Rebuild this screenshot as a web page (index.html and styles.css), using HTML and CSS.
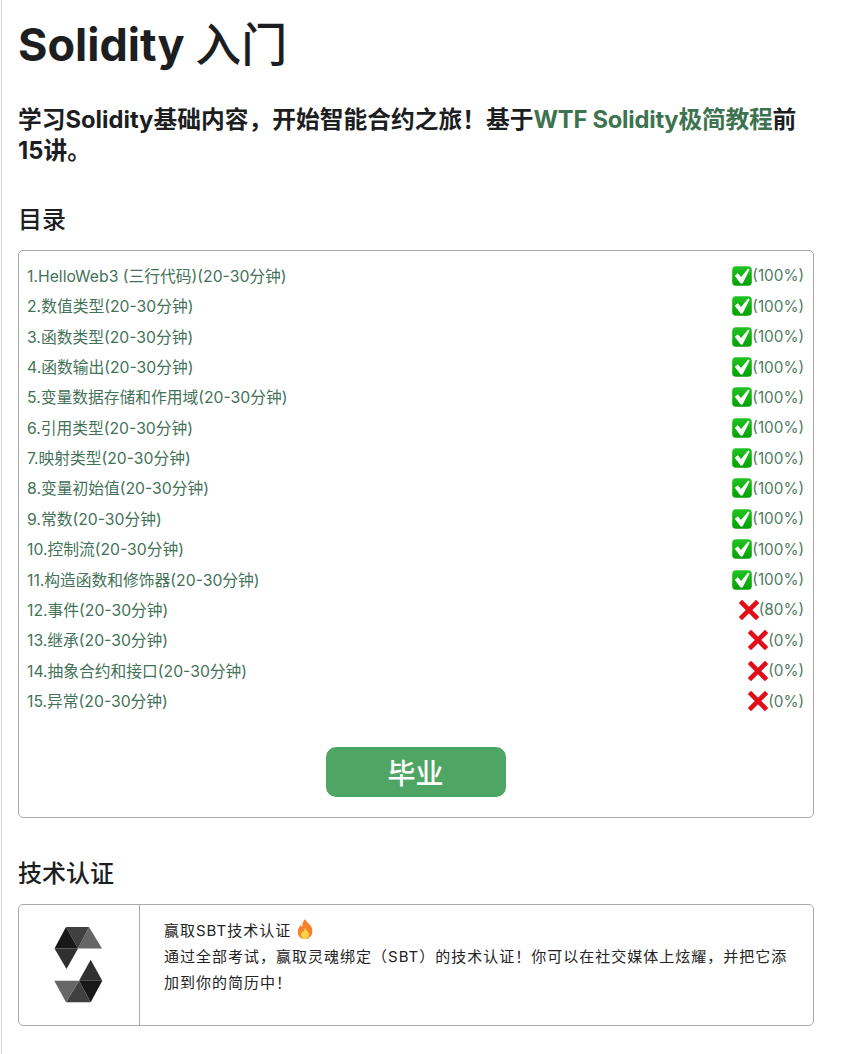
FILE: index.html
```html
<!DOCTYPE html>
<html lang="zh">
<head>
<meta charset="utf-8">
<title>Solidity 入门</title>
<link rel="stylesheet" href="styles.css">
</head>
<body>
<main class="page">
  <h1 class="title">Solidity <span class="title-cjk">入门</span></h1>
  <p class="intro">学习Solidity基础内容，开始智能合约之旅！基于<a class="intro-link" href="#">WTF Solidity极简教程</a>前15讲。</p>
  <h2 class="section-title toc-title">目录</h2>
  <section class="toc">
    <ul class="toc-list">
      <li class="toc-row"><a href="#">1.HelloWeb3 (三行代码)(20-30分钟)</a><span class="status"><svg class="ico" viewBox="0 0 20 20"><use href="#check"/></svg>(100%)</span></li>
      <li class="toc-row"><a href="#">2.数值类型(20-30分钟)</a><span class="status"><svg class="ico" viewBox="0 0 20 20"><use href="#check"/></svg>(100%)</span></li>
      <li class="toc-row"><a href="#">3.函数类型(20-30分钟)</a><span class="status"><svg class="ico" viewBox="0 0 20 20"><use href="#check"/></svg>(100%)</span></li>
      <li class="toc-row"><a href="#">4.函数输出(20-30分钟)</a><span class="status"><svg class="ico" viewBox="0 0 20 20"><use href="#check"/></svg>(100%)</span></li>
      <li class="toc-row"><a href="#">5.变量数据存储和作用域(20-30分钟)</a><span class="status"><svg class="ico" viewBox="0 0 20 20"><use href="#check"/></svg>(100%)</span></li>
      <li class="toc-row"><a href="#">6.引用类型(20-30分钟)</a><span class="status"><svg class="ico" viewBox="0 0 20 20"><use href="#check"/></svg>(100%)</span></li>
      <li class="toc-row"><a href="#">7.映射类型(20-30分钟)</a><span class="status"><svg class="ico" viewBox="0 0 20 20"><use href="#check"/></svg>(100%)</span></li>
      <li class="toc-row"><a href="#">8.变量初始值(20-30分钟)</a><span class="status"><svg class="ico" viewBox="0 0 20 20"><use href="#check"/></svg>(100%)</span></li>
      <li class="toc-row"><a href="#">9.常数(20-30分钟)</a><span class="status"><svg class="ico" viewBox="0 0 20 20"><use href="#check"/></svg>(100%)</span></li>
      <li class="toc-row"><a href="#">10.控制流(20-30分钟)</a><span class="status"><svg class="ico" viewBox="0 0 20 20"><use href="#check"/></svg>(100%)</span></li>
      <li class="toc-row"><a href="#">11.构造函数和修饰器(20-30分钟)</a><span class="status"><svg class="ico" viewBox="0 0 20 20"><use href="#check"/></svg>(100%)</span></li>
      <li class="toc-row"><a href="#">12.事件(20-30分钟)</a><span class="status"><svg class="ico" viewBox="0 0 20 20"><use href="#cross"/></svg>(80%)</span></li>
      <li class="toc-row"><a href="#">13.继承(20-30分钟)</a><span class="status"><svg class="ico" viewBox="0 0 20 20"><use href="#cross"/></svg>(0%)</span></li>
      <li class="toc-row"><a href="#">14.抽象合约和接口(20-30分钟)</a><span class="status"><svg class="ico" viewBox="0 0 20 20"><use href="#cross"/></svg>(0%)</span></li>
      <li class="toc-row"><a href="#">15.异常(20-30分钟)</a><span class="status"><svg class="ico" viewBox="0 0 20 20"><use href="#cross"/></svg>(0%)</span></li>
    </ul>
    <div class="actions"><button class="graduate" type="button">毕业</button></div>
  </section>
  <h2 class="section-title cert-title">技术认证</h2>
  <section class="cert">
    <div class="cert-logo">
      <svg class="logo" viewBox="54 928 49 76">
        <polygon fill="#666" points="89,928 102,949.5 78,949.5"/>
        <polygon fill="#404040" points="66,928 89,928 78,949.5"/>
        <polygon fill="#181818" points="66,928 78,949.5 54.5,949.5"/>
        <polygon fill="#303030" points="54.5,949.5 78,949.5 66.5,970"/>
        <polygon fill="#303030" points="90.7,960.7 102.3,981.7 79,981.7"/>
        <polygon fill="#181818" points="79,981.7 102.3,981.7 90.7,1003.3"/>
        <polygon fill="#404040" points="66,1003.3 90.7,1003.3 79,981.7"/>
        <polygon fill="#666" points="54.3,981.7 79,981.7 66,1003.3"/>
      </svg>
    </div>
    <div class="cert-text">
      <div>赢取SBT技术认证 <svg class="fire" viewBox="0 0 16 20"><path fill="#f5822a" d="M8 0c1 3 5 5 6.700 8.500C16.500 13 14.500 20 8 20S-.5 14 1.500 9.500C2.200 8 3 7 3.500 6c.5 1 1 1.700 1.800 2.200C5 5 6 2 8 0z"/><path fill="#fdd24a" d="M8.300 9c.5 2 3.700 3.500 3.700 6.500 0 2.500-1.800 4.500-4 4.500s-4-2-4-4.300c0-1.700 1-2.700 1.700-3.700.3.700.6 1 1.100 1.300C6.600 11.800 7 10 8.300 9z"/></svg></div>
      <div>通过全部考试，赢取灵魂绑定（SBT）的技术认证！你可以在社交媒体上炫耀，并把它添加到你的简历中！</div>
    </div>
  </section>
</main>
<svg class="defs" width="0" height="0" aria-hidden="true">
  <defs>
    <linearGradient id="greenGrad" x1="0" y1="0" x2="0" y2="1"><stop offset="0" stop-color="#22c422"/><stop offset="1" stop-color="#04a004"/></linearGradient>
    <symbol id="check" viewBox="0 0 20 20">
      <rect x="0.200" y="0.200" width="19.600" height="19.600" rx="3.800" fill="url(#greenGrad)"/>
      <path d="M2.800 9.800 L5.800 7.300 L9 11 L16.200 2.600 L17.600 3.500 L10.600 17.400 L8.600 17.400 Z" fill="#fff"/>
    </symbol>
    <symbol id="cross" viewBox="0 0 20 20">
      <path d="M3 3 L17 17 M17 3 L3 17" stroke="#e30d17" stroke-width="4.600" stroke-linecap="square" fill="none"/>
    </symbol>
  </defs>
</svg>
</body>
</html>
```
FILE: styles.css
```css
html, body { margin: 0; padding: 0; background: #fff; }
body { font-family: Inter, "Noto Sans CJK SC", sans-serif; color: #1c1e21; }
.page { margin-left: 1px; border-left: 1px solid #d4d4d4; padding: 0 32px 28px 16px; min-height: 1054px; box-sizing: border-box; width: 845px; }
.title { margin: 0; padding-top: 15px; height: 60px; font-size: 45px; line-height: 60px; font-weight: 700; }
.title-cjk { font-size: 46px; font-weight: 500; line-height: 1; }
.intro { margin: 29px 0 0; font-size: 23.750px; line-height: 31px; font-weight: 700; }
.intro-link { color: #3e7350; text-decoration: none; letter-spacing: -0.25px; }
.section-title { margin: 0; font-size: 24px; line-height: 32px; font-weight: 500; }
.toc-title { margin-top: 38px; }
.toc { margin-top: 14px; border: 1px solid #aaa; border-radius: 5px; padding: 9.300px 9px 20px 8px; height: 568px; box-sizing: border-box; }
.toc-list { list-style: none; margin: 0; padding: 0; }
.toc-row { display: flex; justify-content: space-between; align-items: center; height: 30.36px; font-size: 15.750px; color: #4f7a62; }
.toc-row a { color: #437258; text-decoration: none; }
.status { display: flex; align-items: center; font-size: 15.300px; padding-top: 1px; }
.ico { width: 20px; height: 20px; }
.actions { display: flex; justify-content: center; margin-top: 31.700px; }
.graduate { width: 180px; height: 50px; border: none; border-radius: 10px; background: #4fa563; color: #fff; font: 500 28px Inter, "Noto Sans CJK SC", sans-serif; }
.cert-title { margin-top: 40px; }
.cert { margin-top: 14px; display: grid; grid-template-columns: 121px 1fr; height: 122px; border: 1px solid #aaa; border-radius: 5px; box-sizing: border-box; }
.cert-logo { border-right: 1px solid #aaa; padding-right: 1px; display: flex; align-items: center; justify-content: center; }
.logo { width: 49px; height: 76px; }
.cert-text { padding: 13px 24px; font-size: 15px; line-height: 26px; letter-spacing: 1px; color: #222; }
.fire { width: 16px; height: 20px; vertical-align: -3px; }
.defs { position: absolute; }
```
